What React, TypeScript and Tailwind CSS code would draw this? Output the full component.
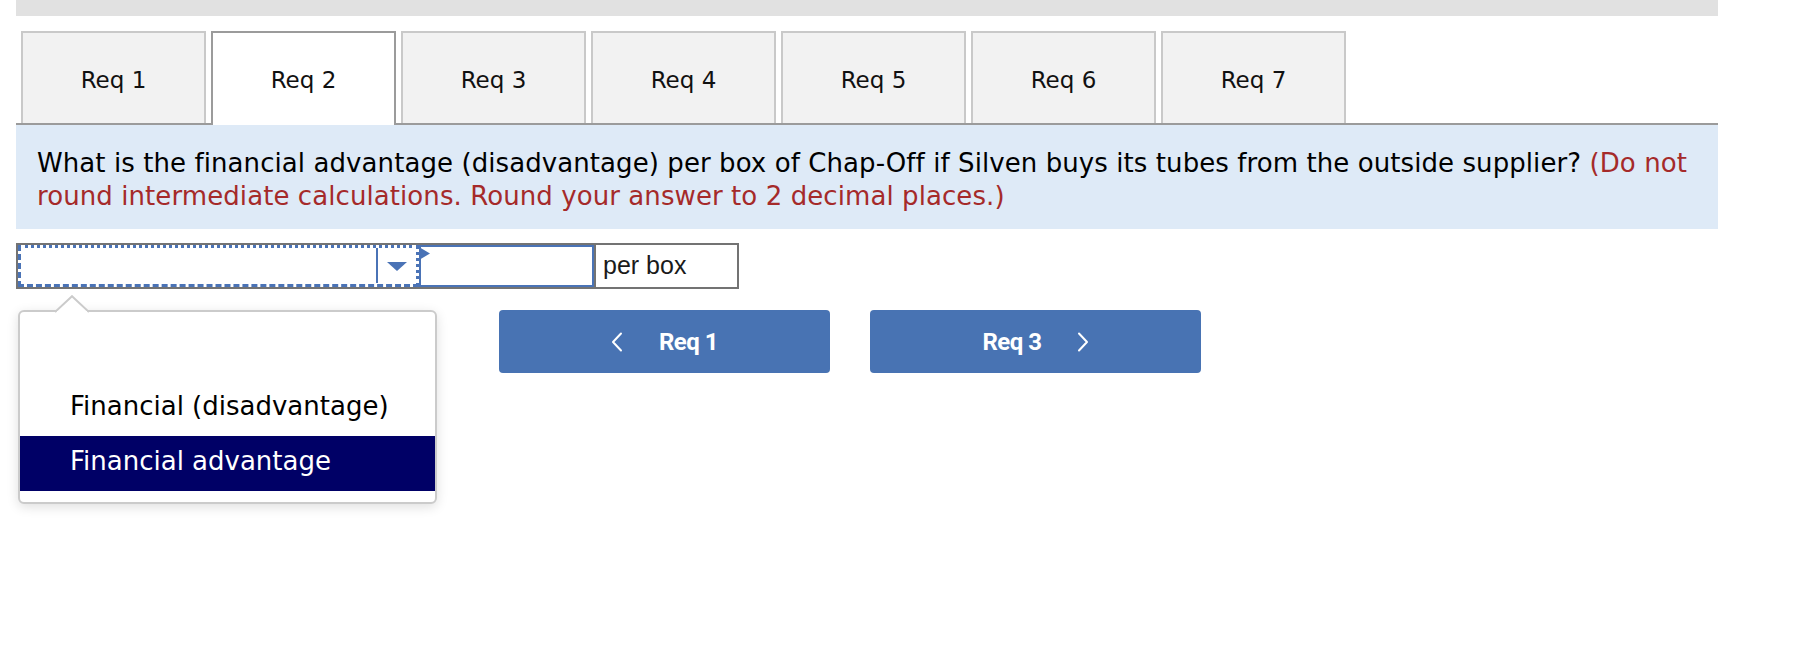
import React from "react";

const VERDANA = "font-['DejaVu_Sans',Verdana,sans-serif]";

function Chevron({ dir }: { dir: "left" | "right" }) {
  return (
    <svg width="12" height="20" viewBox="0 0 12 20" fill="none">
      {dir === "left" ? (
        <polyline points="10,1.5 2,10 10,18.5" stroke="white" strokeWidth="2" strokeLinecap="round" strokeLinejoin="round" />
      ) : (
        <polyline points="2,1.5 10,10 2,18.5" stroke="white" strokeWidth="2" strokeLinecap="round" strokeLinejoin="round" />
      )}
    </svg>
  );
}

export default function App() {
  const tabs = ["Req 1", "Req 2", "Req 3", "Req 4", "Req 5", "Req 6", "Req 7"];
  return (
    <div className={`w-[1804px] h-[662px] bg-white overflow-hidden ${VERDANA}`}>
      <div className="ml-[16px] w-[1702px] h-[16px] bg-[#e1e1e1]" />

      <div className="ml-[16px] w-[1702px] mt-[15px] flex items-start gap-[5px] pl-[5px] border-b-2 border-[#9b9b9b]">
        {tabs.map((t, i) =>
          i === 1 ? (
            <div
              key={t}
              className="w-[185px] h-[94px] -mb-[2px] bg-white border-2 border-b-0 border-[#9b9b9b] flex items-center justify-center pt-[5px] pb-[3px] text-[23px] text-[#111]"
            >
              {t}
            </div>
          ) : (
            <div
              key={t}
              className="w-[185px] h-[92px] bg-[#f2f2f2] border-2 border-b-0 border-[#c9c9c9] flex items-center justify-center pt-[5px] pb-[1px] text-[23px] text-[#111]"
            >
              {t}
            </div>
          )
        )}
      </div>

      <div className="ml-[16px] w-[1702px] bg-[#deeaf7] pt-[22px] pb-[16px] pl-[21px] pr-[8px] text-[26px] leading-[33px] tracking-[0.08px] text-black">
        What is the financial advantage (disadvantage) per box of Chap-Off if Silven buys its tubes from the outside supplier?{" "}
        <span className="text-[#a52a2a]">
          (Do not round intermediate calculations. Round your answer to 2 decimal places.)
        </span>
      </div>

      <div className="relative ml-[16px] mt-[14px] h-[46px] flex">
        {/* select cell */}
        <div className="w-[403px] h-full border-y-2 border-l-2 border-[#737373] flex">
          <div className="flex-1 flex border-[3px] border-dotted [border-bottom-style:dashed] [border-left-style:dashed] border-[#4a73b6]">
            <div className="flex-1" />
            <div className="w-[2px] h-[35px] bg-[#4a73b6]" />
            <div className="w-[38px] flex items-center justify-center">
              <svg width="20" height="9" viewBox="0 0 20 9">
                <polygon points="0,0 20,0 10,9" fill="#4a73b6" />
              </svg>
            </div>
          </div>
        </div>
        {/* input cell */}
        <div className="relative w-[175px] h-full border-y-2 border-[#737373] flex">
          <div className="flex-1 border-2 border-[#4a73b6] bg-white" />
          <svg className="absolute left-0 top-[2px]" width="11" height="13" viewBox="0 0 11 13">
            <polygon points="0,0 11,6.5 0,13" fill="#4a73b6" />
          </svg>
        </div>
        {/* per box */}
        <div className="w-[145px] h-full border-2 border-[#737373] flex items-center pl-[7px] font-['Liberation_Sans',Arial,sans-serif] text-[25px] text-[#1a1a1a]">
          per box
        </div>

        {/* dropdown popover */}
        <div className="absolute left-[2px] top-[67px] w-[419px] h-[194px] bg-white border-2 border-[#cbcbcb] rounded-[6px] shadow-[0_3px_12px_rgba(0,0,0,0.13)] pt-[14px]">
          <svg className="absolute left-[35px] -top-[17px]" width="34" height="19" viewBox="0 0 34 19">
            <polygon points="0,18 17,1 34,18" fill="white" />
            <polyline points="0,17 17,1.2 34,17" fill="none" stroke="#cbcbcb" strokeWidth="2" />
            <rect x="2" y="16" width="30" height="3" fill="white" />
          </svg>
          <div className="h-[55px]" />
          <div className="h-[55px] leading-[51px] pl-[50px] text-[26px] text-black">Financial (disadvantage)</div>
          <div className="h-[55px] leading-[51px] pl-[50px] text-[26px] text-white bg-[#000066]">Financial advantage</div>
        </div>
      </div>

      <div className="ml-[499px] mt-[21px] flex gap-[40px] font-['Roboto',Arial,sans-serif] font-bold text-[24px] tracking-[-0.5px] text-white">
        <div className="w-[331px] h-[63px] rounded-[4px] bg-[#4873b3] flex items-center justify-center gap-[36px]">
          <Chevron dir="left" />
          <span>Req 1</span>
        </div>
        <div className="w-[331px] h-[63px] rounded-[4px] bg-[#4873b3] flex items-center justify-center gap-[35px]">
          <span>Req 3</span>
          <Chevron dir="right" />
        </div>
      </div>
    </div>
  );
}
